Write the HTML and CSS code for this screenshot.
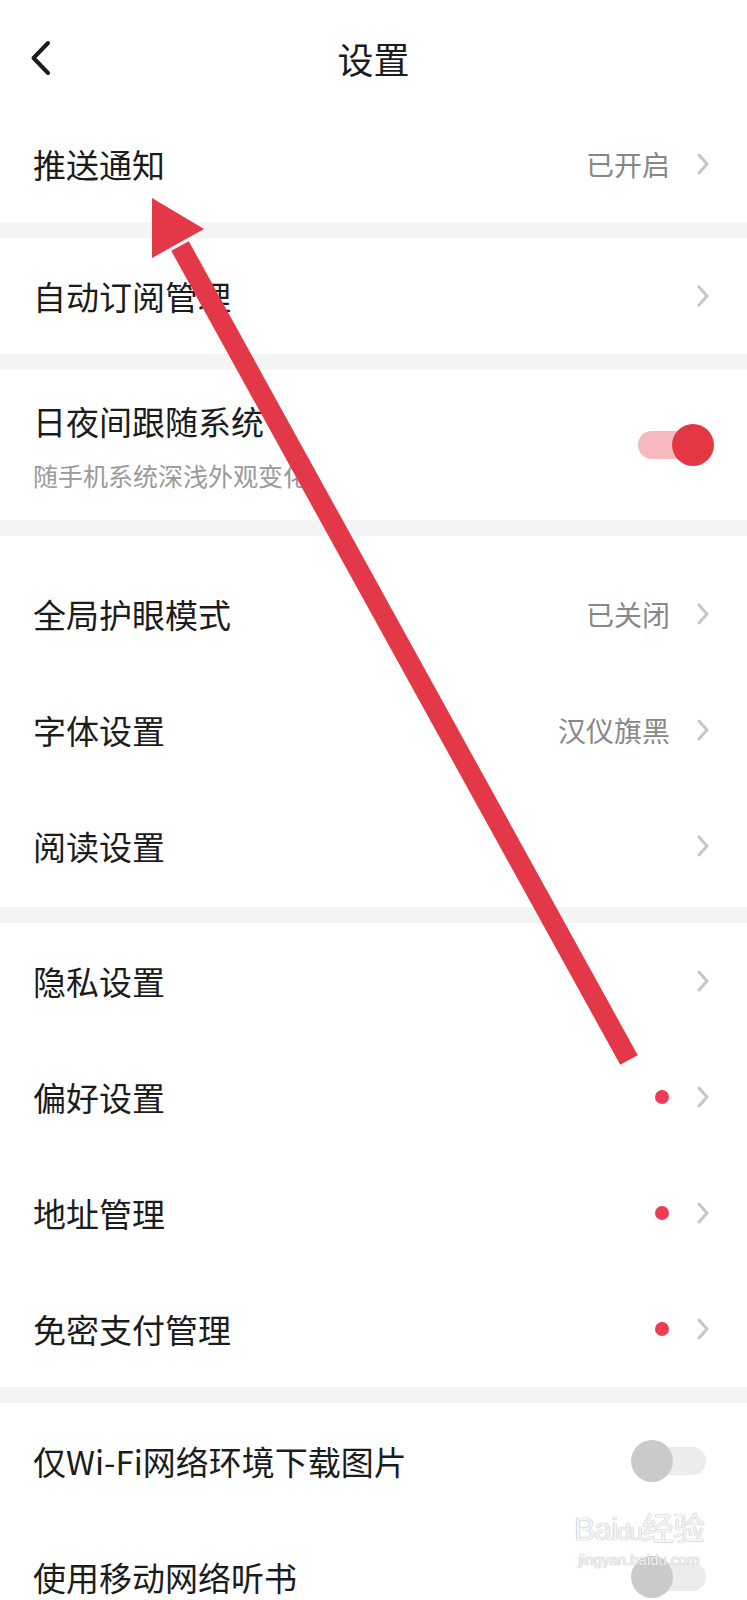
FILE: index.html
```html
<!DOCTYPE html>
<html lang="zh-CN">
<head>
    <meta charset="UTF-8">
    <meta name="viewport" content="width=device-width, initial-scale=1.0">
    <title>设置</title>
    <link rel="stylesheet" href="styles.css">
</head>
<body>
    <div id="page">
        <div class="header">
            <div class="back">
                <svg width="22" height="36" viewBox="0 0 22 36"><path d="M18 3 L3.5 18 L18 33" fill="none" stroke="#1c1c1c" stroke-width="4" stroke-linecap="round" stroke-linejoin="round"/></svg>
            </div>
            <h1 class="title">设置</h1>
            <div></div>
        </div>

        <ul class="group">
            <li class="row">
                <span class="label">推送通知</span>
                <span class="value">已开启</span>
                <svg class="arrow" width="12" height="22" viewBox="0 0 12 22"><path d="M2 2 L10 11 L2 20" fill="none" stroke="#c6c6c6" stroke-width="3" stroke-linecap="round" stroke-linejoin="round"/></svg>
            </li>
        </ul>
        <ul class="group">
            <li class="row">
                <span class="label">自动订阅管理</span>
                <svg class="arrow" width="12" height="22" viewBox="0 0 12 22"><path d="M2 2 L10 11 L2 20" fill="none" stroke="#c6c6c6" stroke-width="3" stroke-linecap="round" stroke-linejoin="round"/></svg>
            </li>
        </ul>
        <ul class="group">
            <li class="row row-tall row-switch">
                <div class="texts">
                    <span class="label">日夜间跟随系统</span>
                    <span class="sub">随手机系统深浅外观变化</span>
                </div>
                <div class="switch on"><span class="track"></span><span class="thumb"></span></div>
            </li>
        </ul>
        <ul class="group group-pad">
            <li class="row">
                <span class="label">全局护眼模式</span>
                <span class="value">已关闭</span>
                <svg class="arrow" width="12" height="22" viewBox="0 0 12 22"><path d="M2 2 L10 11 L2 20" fill="none" stroke="#c6c6c6" stroke-width="3" stroke-linecap="round" stroke-linejoin="round"/></svg>
            </li>
            <li class="row">
                <span class="label">字体设置</span>
                <span class="value">汉仪旗黑</span>
                <svg class="arrow" width="12" height="22" viewBox="0 0 12 22"><path d="M2 2 L10 11 L2 20" fill="none" stroke="#c6c6c6" stroke-width="3" stroke-linecap="round" stroke-linejoin="round"/></svg>
            </li>
            <li class="row">
                <span class="label">阅读设置</span>
                <svg class="arrow" width="12" height="22" viewBox="0 0 12 22"><path d="M2 2 L10 11 L2 20" fill="none" stroke="#c6c6c6" stroke-width="3" stroke-linecap="round" stroke-linejoin="round"/></svg>
            </li>
        </ul>
        <ul class="group">
            <li class="row">
                <span class="label">隐私设置</span>
                <svg class="arrow" width="12" height="22" viewBox="0 0 12 22"><path d="M2 2 L10 11 L2 20" fill="none" stroke="#c6c6c6" stroke-width="3" stroke-linecap="round" stroke-linejoin="round"/></svg>
            </li>
            <li class="row">
                <span class="label">偏好设置</span>
                <span class="dot"></span>
                <svg class="arrow" width="12" height="22" viewBox="0 0 12 22"><path d="M2 2 L10 11 L2 20" fill="none" stroke="#c6c6c6" stroke-width="3" stroke-linecap="round" stroke-linejoin="round"/></svg>
            </li>
            <li class="row">
                <span class="label">地址管理</span>
                <span class="dot"></span>
                <svg class="arrow" width="12" height="22" viewBox="0 0 12 22"><path d="M2 2 L10 11 L2 20" fill="none" stroke="#c6c6c6" stroke-width="3" stroke-linecap="round" stroke-linejoin="round"/></svg>
            </li>
            <li class="row">
                <span class="label">免密支付管理</span>
                <span class="dot"></span>
                <svg class="arrow" width="12" height="22" viewBox="0 0 12 22"><path d="M2 2 L10 11 L2 20" fill="none" stroke="#c6c6c6" stroke-width="3" stroke-linecap="round" stroke-linejoin="round"/></svg>
            </li>
        </ul>
        <ul class="group">
            <li class="row row-switch">
                <span class="label">仅Wi-Fi网络环境下载图片</span>
                <div class="switch"><span class="track"></span><span class="thumb"></span></div>
            </li>
            <li class="row row-switch">
                <span class="label">使用移动网络听书</span>
                <div class="switch"><span class="track"></span><span class="thumb"></span></div>
            </li>
        </ul>

        <!-- annotation arrow drawn over the screenshot -->
        <svg class="pointer" width="747" height="1600" viewBox="0 0 747 1600">
            <line x1="629" y1="1060" x2="180" y2="246" stroke="#e23847" stroke-width="20"/>
            <polygon points="152,198 152,258 204,229" fill="#e23847"/>
        </svg>

        <div class="mark">
            <div class="mark-big">Bai<span class="paw">du</span>经验</div>
            <div class="mark-small">jingyan.baidu.com</div>
        </div>
    </div>
</body>
</html>
```

FILE: styles.css
```css
body{
    margin: 0;
    background: #fff;
    font-family: "Noto Sans CJK SC", "Noto Sans", sans-serif;
    color: #1c1c1c;
}
#page{
    position: relative;
    width: 747px;
    overflow: hidden;
}
.header{
    display: grid;
    grid-template-columns: 1fr auto 1fr;
    align-items: center;
    height: 106px; padding-top: 10px; box-sizing: border-box;
}
.back{
    padding-left: 30px;
    display: flex;
}
.title{
    margin: 0;
    font-size: 36px; font-weight: 400; line-height: 44px;
}
ul{
    list-style: none;
    margin: 0; padding: 0;
}
.group{
    border-bottom: 16px solid #f4f4f4;
}
.group-pad{
    padding-top: 20px; padding-bottom: 3px;
}
.row{
    display: flex; align-items: center;
    height: 116px;
    padding: 0 38px 0 33px;
}
.row-tall{
    height: 150px;
}
.row-switch{
    padding-right: 33px;
}
.label{
    flex: 1;
    font-size: 33px; line-height: 40px;
}
.texts{
    flex: 1;
    display: flex; flex-direction: column;
    gap: 18px;
    margin-top: 2px;
}
.sub{
    font-size: 25px; line-height: 32px; color: #9a9a9a;
}
.value{
    font-size: 28px; color: #888;
    margin-right: 27px;
}
.dot{
    width: 14px; height: 14px; border-radius: 50%;
    background: #ef3a58;
    margin-right: 28px;
}
.arrow{
    display: block;
}
.switch{
    position: relative;
    width: 83px; height: 42px;
    display: flex; align-items: center;
}
.track{
    margin-left: 7px;
    width: 68px; height: 28px; border-radius: 14px;
    background: #ececec;
}
.thumb{
    position: absolute; top: 0; left: 0;
    width: 42px; height: 42px; border-radius: 50%;
    background: #cacaca;
}
.switch.on .track{
    background: #f5b9bf;
}
.switch.on .thumb{
    left: auto; right: 0;
    background: #e43744;
}
.pointer{
    position: absolute; top: 0; left: 0;
    pointer-events: none;
}
.mark{
    position: absolute; left: 570px; top: 1510px;
    width: 138px;
    font-family: "Liberation Sans", sans-serif;
    color: rgba(255,255,255,0.85);
    text-shadow: 0 0 1px #b8b8b8, 0 0 1px #b8b8b8;
    text-align: center;
}
.mark-big{
    font-size: 32px; line-height: 38px; letter-spacing: -1px;
}
.paw{
    font-size: 24px;
}
.mark-small{
    font-size: 15px; line-height: 18px;
}
```
